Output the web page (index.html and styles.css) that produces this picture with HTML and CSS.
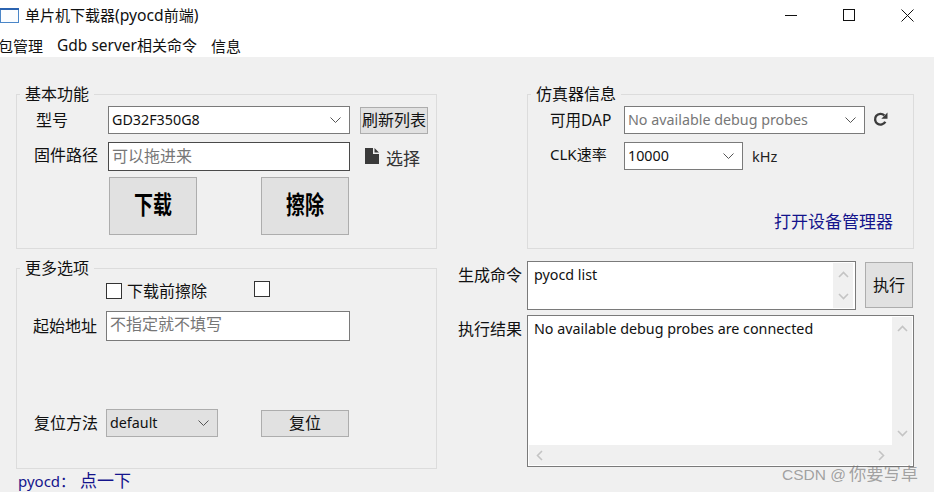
FILE: index.html
```
<!DOCTYPE html>
<html lang="zh">
<head>
<meta charset="utf-8">
<title>单片机下载器(pyocd前端)</title>
<link rel="stylesheet" href="styles.css">
</head>
<body>
<div class="window">
  <header class="titlebar">
    <svg class="app-icon" width="20" height="16" viewBox="0 0 20 16"><rect x=".5" y=".5" width="18" height="14" fill="#fbfdff" stroke="#4a86c8"/><rect x="0" y="0" width="19" height="2" fill="#2b63b0"/></svg>
    <span class="title"><span class="zh">单片机下载器</span>(pyocd<span class="zh">前端</span>)</span>
    <div class="win-controls">
      <svg width="13" height="13" viewBox="0 0 13 13"><path d="M0 6.500h12" stroke="#111" fill="none"/></svg>
      <svg width="13" height="13" viewBox="0 0 13 13"><rect x=".5" y=".5" width="11" height="11" stroke="#111" fill="none"/></svg>
      <svg width="13" height="13" viewBox="0 0 13 13"><path d="M.5.5l12 12M12.500.5l-12 12" stroke="#111" fill="none"/></svg>
    </div>
  </header>
  <nav class="menubar"><span class="menu-first zh">包管理</span><span>Gdb server<span class="zh">相关命令</span></span><span class="zh">信息</span></nav>
  <main class="content">
    <section class="col-left">
      <fieldset class="group group-basic">
        <legend>基本功能</legend>
        <div class="row row-model">
          <label class="lbl lbl-model">型号</label>
          <div class="combo combo-model"><span>GD32F350G8</span><svg class="chev" width="11" height="6" viewBox="0 0 11 6"><path d="M.5.5l5 5 5-5" fill="none" stroke="#555"/></svg></div>
          <button class="btn btn-refresh">刷新列表</button>
        </div>
        <div class="row row-path">
          <label class="lbl lbl-path">固件路径</label>
          <div class="input input-path placeholder">可以拖进来</div>
          <svg class="file-icon" width="14" height="16" viewBox="0 0 14 16"><path d="M0 0h8v6h6v10H0zM9.500 0L14 4.500H9.500z" fill="#3a3a3a"/></svg>
          <span class="choose">选择</span>
        </div>
        <div class="row row-actions">
          <button class="btn btn-big"><span class="big-text">下载</span></button>
          <button class="btn btn-big"><span class="big-text">擦除</span></button>
        </div>
      </fieldset>
      <fieldset class="group group-more">
        <legend>更多选项</legend>
        <div class="row row-checks">
          <span class="check"></span><span class="check-label">下载前擦除</span><span class="check check-2"></span>
        </div>
        <div class="row row-addr">
          <label class="lbl lbl-addr">起始地址</label>
          <div class="input input-addr placeholder">不指定就不填写</div>
        </div>
        <div class="row row-reset">
          <label class="lbl lbl-reset">复位方法</label>
          <div class="combo combo-reset"><span>default</span><svg class="chev" width="11" height="6" viewBox="0 0 11 6"><path d="M.5.5l5 5 5-5" fill="none" stroke="#555"/></svg></div>
          <button class="btn btn-reset">复位</button>
        </div>
      </fieldset>
      <div class="status">pyocd：<span class="status-zh">点一下</span></div>
    </section>
    <section class="col-right">
      <fieldset class="group group-probe">
        <legend>仿真器信息</legend>
        <div class="row row-dap">
          <label class="lbl lbl-dap">可用DAP</label>
          <div class="combo combo-dap placeholder"><span>No available debug probes</span><svg class="chev" width="11" height="6" viewBox="0 0 11 6"><path d="M.5.5l5 5 5-5" fill="none" stroke="#555"/></svg></div>
          <svg class="reload" width="15" height="15" viewBox="0 0 15 15"><path d="M12.300 9.700A5.400 5.400 0 1 1 11.300 3.400" fill="none" stroke="#3c3c3c" stroke-width="2.400"/><path d="M14.500 .5v6.200H8.300z" fill="#3c3c3c"/></svg>
        </div>
        <div class="row row-clk">
          <label class="lbl lbl-clk">CLK速率</label>
          <div class="combo combo-clk"><span>10000</span><svg class="chev" width="11" height="6" viewBox="0 0 11 6"><path d="M.5.5l5 5 5-5" fill="none" stroke="#555"/></svg></div>
          <span class="unit">kHz</span>
        </div>
        <div class="link">打开设备管理器</div>
      </fieldset>
      <div class="row row-cmd">
        <label class="lbl lbl-side">生成命令</label>
        <div class="textbox textbox-cmd">
          <div class="text-area">pyocd list</div>
          <div class="vbar">
            <svg width="11" height="7" viewBox="0 0 11 7"><path d="M1 6l4.500-4.500L10 6" fill="none" stroke="#c4c4c4" stroke-width="1.600"/></svg>
            <svg width="11" height="7" viewBox="0 0 11 7"><path d="M1 1l4.500 4.500L10 1" fill="none" stroke="#c4c4c4" stroke-width="1.600"/></svg>
          </div>
        </div>
        <button class="btn btn-run">执行</button>
      </div>
      <div class="row row-result">
        <label class="lbl lbl-side">执行结果</label>
        <div class="textbox textbox-result">
          <div class="result-grid">
            <div class="text-area">No available debug probes are connected</div>
            <div class="vbar">
              <svg width="11" height="7" viewBox="0 0 11 7"><path d="M1 6l4.500-4.500L10 6" fill="none" stroke="#c4c4c4" stroke-width="1.600"/></svg>
              <svg width="11" height="7" viewBox="0 0 11 7"><path d="M1 1l4.500 4.500L10 1" fill="none" stroke="#c4c4c4" stroke-width="1.600"/></svg>
            </div>
            <div class="hbar">
              <svg width="7" height="11" viewBox="0 0 7 11"><path d="M6 1L1.500 5.500 6 10" fill="none" stroke="#c4c4c4" stroke-width="1.600"/></svg>
              <svg width="7" height="11" viewBox="0 0 7 11"><path d="M1 1l4.500 4.500L1 10" fill="none" stroke="#c4c4c4" stroke-width="1.600"/></svg>
            </div>
            <div class="corner"></div>
          </div>
        </div>
      </div>
    </section>
  </main>
  <div class="watermark">CSDN @<span class="wm-zh">你要写卓</span></div>
</div>
</body>
</html>
```
FILE: styles.css
```
* { box-sizing: border-box; }
html, body { margin: 0; padding: 0; }
body {
  width: 934px;
  height: 492px;
  overflow: hidden;
  font-family: "Noto Sans", "Noto Sans CJK SC", sans-serif;
  font-size: 14.300px;
  color: #111;
  background: #fff;
}
.window { position: relative; width: 934px; height: 492px; display: flex; flex-direction: column; overflow: hidden; }
.zh { font-size: 15px; }

.titlebar { height: 30px; display: flex; align-items: center; flex: none; background: #fff; }
.app-icon { margin-top: 1px; flex: none; }
.title { margin-left: 5px; font-size: 15.700px; line-height: 20px; }
.win-controls { margin-left: auto; display: flex; gap: 45px; padding-right: 20px; }

.menubar { height: 27px; flex: none; display: flex; gap: 14px; align-items: center; background: #fff; font-size: 15.500px; padding-top: 3px; }
.menu-first { margin-left: -2px; }

.content { flex: 1; background: #f0f0f0; display: grid; grid-template-columns: 421px 456px; column-gap: 21px; padding: 28px 0 0 16px; align-content: start; }
.col-left, .col-right { display: flex; flex-direction: column; }

.group { margin: 0; min-width: 0; border: 1px solid #dcdcdc; padding: 3px 0 0; }
.group legend { margin-left: 3px; padding: 0 5px; font-size: 16px; line-height: 18px; height: 18px; }
.group-basic, .group-probe { height: 164px; }
.group-more { height: 210px; margin-top: 10px; }
.group-probe { margin-left: 69px; }

.row { display: flex; align-items: center; }
.lbl { font-size: 16px; line-height: 20px; white-space: nowrap; }

.combo, .input { background: #fff; border: 1px solid #7a7a7a; display: flex; align-items: center; line-height: 20px; }
.combo { padding: 0 8px 0 3px; justify-content: space-between; }
.input { padding: 0 3px 1px; font-size: 16px; }
.input-addr { padding-bottom: 5px; }
.input-path { border-color: #4a4a4a; }
.placeholder { color: #777; }
.chev { flex: none; }

.btn { font: inherit; color: #111; background: #e1e1e1; border: 1px solid #adadad; padding: 0; display: block; }

.row-model { height: 28px; padding-left: 19px; }
.lbl-model { width: 72px; }
.combo-model { width: 242px; height: 28px; }
.btn-refresh { width: 68px; height: 27px; margin-left: 10px; font-size: 16px; line-height: 20px; }

.row-path { height: 29px; margin-top: 8px; padding-left: 17px; }
.lbl-path { width: 74px; margin-top: -4px; }
.input-path { width: 242px; height: 29px; }
.file-icon { margin-left: 15px; margin-top: -1px; }
.choose { margin-left: 7px; font-size: 17px; color: #333; margin-top: 2px; }

.row-actions { margin-top: 6px; padding-left: 92px; gap: 64px; }
.btn-big { width: 88px; height: 58px; color: #000; padding-bottom: 2px; }
.big-text { display: inline-block; font-size: 20px; font-weight: 700; line-height: 24px; transform: scale(.95, 1.25); }

.row-checks { height: 20px; margin-top: 1px; padding-left: 89px; }
.check { width: 16px; height: 16px; background: #fff; border: 1px solid #333; flex: none; }
.check-label { margin-left: 5px; width: 127px; font-size: 16px; line-height: 20px; }
.check-2 { margin-top: -4px; }
.row-addr { margin-top: 10px; height: 30px; padding-left: 16px; }
.lbl-addr { width: 73px; margin-top: -1px; }
.input-addr { width: 244px; height: 30px; }
.row-reset { margin-top: 68px; height: 28px; padding-left: 17px; }
.lbl-reset { width: 72px; }
.combo-reset { width: 112px; height: 28px; background: #e1e1e1; border-color: #adadad; }
.btn-reset { width: 88px; height: 27px; margin-left: 43px; margin-top: 1px; padding-bottom: 2px; font-size: 16px; line-height: 20px; }

.status { margin-top: 2px; padding-left: 2px; font-size: 15px; line-height: 20px; color: #14148c; }
.status-zh { font-size: 17px; margin-left: 5px; }

.row-dap { height: 28px; padding-left: 22px; }
.lbl-dap { width: 74px; font-size: 15.500px; }
.combo-dap { width: 241px; height: 28px; }
.reload { margin-left: 8px; margin-top: -1px; }
.row-clk { height: 28px; margin-top: 8px; padding-left: 22px; }
.lbl-clk { width: 74px; margin-top: -4px; font-size: 15px; }
.combo-clk { width: 119px; height: 28px; }
.unit { margin-left: 9px; font-size: 14.500px; color: #222; }
.link { margin-top: 42px; text-align: right; padding-right: 20px; font-size: 17px; line-height: 20px; color: #14148c; }

.row-cmd { height: 49px; margin-top: 12px; align-items: flex-start; }
.row-result { height: 152px; margin-top: 5px; align-items: flex-start; }
.lbl-side { width: 69px; margin-top: 4px; }
.textbox { background: #fff; border: 1px solid #7a7a7a; padding: 1px; line-height: 20px; }
.textbox-cmd { width: 329px; height: 49px; display: flex; }
.textbox-result { width: 387px; height: 152px; }
.text-area { flex: 1; padding: 2px 5px; min-width: 0; }
.vbar { width: 20px; background: #f0f0f0; display: flex; flex-direction: column; justify-content: space-between; align-items: center; padding: 8px 0; }
.textbox-cmd .vbar { margin-right: 1px; }
.btn-run { width: 48px; height: 46px; margin-left: 9px; margin-top: 1px; font-size: 16px; line-height: 20px; }
.result-grid { display: grid; grid-template-columns: 363px 20px; grid-template-rows: 128px 20px; height: 148px; }
.hbar { background: #f0f0f0; display: flex; justify-content: space-between; align-items: center; padding: 0 7px; }
.corner { background: #f0f0f0; }

.watermark { position: absolute; left: 782px; top: 464px; font-family: "Liberation Sans", "Noto Sans CJK SC", sans-serif; font-size: 15.500px; line-height: 20px; color: rgba(110, 110, 110, .62); white-space: nowrap; }
.wm-zh { font-size: 17.300px; margin-left: 3px; }
```
